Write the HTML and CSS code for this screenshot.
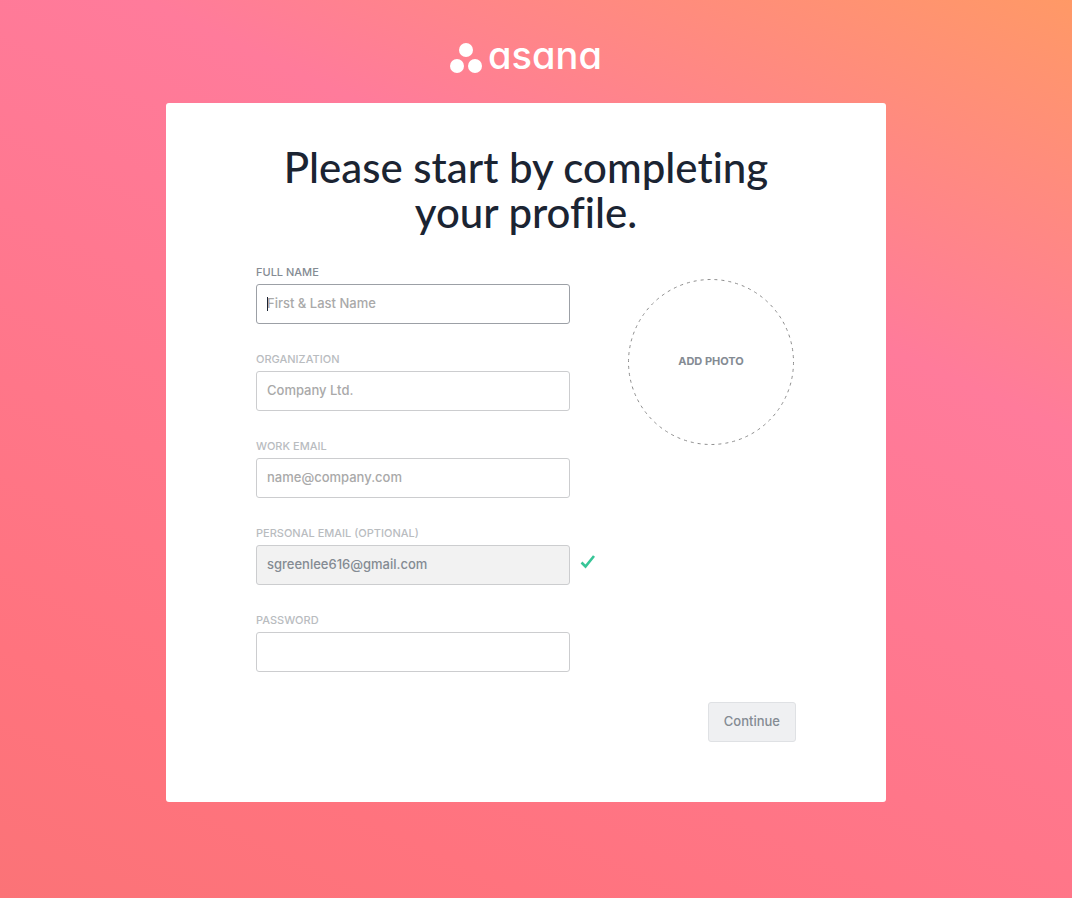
FILE: index.html
```html
<!DOCTYPE html>
<html lang="en">
<head>
<meta charset="utf-8">
<meta name="viewport" content="width=device-width, initial-scale=1">
<title>Asana</title>
<link rel="stylesheet" href="styles.css">
</head>
<body>
<div class="page">
  <header class="brand">
    <svg class="brand-mark" viewBox="0 0 32 30" aria-hidden="true">
      <circle cx="16" cy="7" r="7"/>
      <circle cx="7" cy="23" r="7"/>
      <circle cx="25" cy="23" r="7"/>
    </svg>
    <span class="brand-name">asana</span>
  </header>

  <main class="card">
    <h1 class="title">Please start by completing your profile.</h1>
    <form class="profile">
      <div class="fields">
        <div class="field field-active">
          <label for="name">FULL NAME</label>
          <div class="control">
            <input id="name" type="text" placeholder="First &amp; Last Name">
            <span class="caret" aria-hidden="true"></span>
          </div>
        </div>
        <div class="field">
          <label for="org">ORGANIZATION</label>
          <input id="org" type="text" placeholder="Company Ltd.">
        </div>
        <div class="field">
          <label for="work">WORK EMAIL</label>
          <input id="work" type="email" placeholder="name@company.com">
        </div>
        <div class="field">
          <label for="personal">PERSONAL EMAIL (OPTIONAL)</label>
          <div class="control">
            <input id="personal" type="email" value="sgreenlee616@gmail.com" readonly>
            <svg class="check" viewBox="0 0 16 16" aria-hidden="true"><path d="M1.5 8.5 5.5 12.5 14 2"/></svg>
          </div>
        </div>
        <div class="field">
          <label for="password">PASSWORD</label>
          <input id="password" type="password">
        </div>
      </div>
      <button class="photo" type="button">
        <svg class="photo-ring" viewBox="0 0 166 166" aria-hidden="true"><circle cx="83" cy="83" r="82.5" pathLength="518"/></svg>
        ADD PHOTO
      </button>
      <button class="continue" type="submit">Continue</button>
    </form>
  </main>
</div>
</body>
</html>
```

FILE: styles.css
```css
* {
  box-sizing: border-box;
}

body {
  margin: 0;
  color: #1b2432;
  font-family: "Inter", "Liberation Sans", sans-serif;
}

.page {
  display: flex;
  flex-direction: column;
  align-items: center;
  min-height: 100vh;
  padding: 32px 20px 96px 0;
  background: linear-gradient(205deg, #ff9966 0%, #ff7b9b 31%, #ff737e 82%, #fb7377 100%);
}

.brand {
  display: flex;
  align-items: center;
  gap: 6px;
  height: 48px;
  color: #fff;
}

.brand-mark {
  width: 32px;
  height: 30px;
  margin-top: 4px;
  fill: #fff;
}

.brand-name {
  padding-bottom: 2px;
  font-size: 38px;
  font-weight: 500;
  font-feature-settings: "cv11";
  line-height: 46px;
}

.card {
  width: 100%;
  max-width: 720px;
  margin-top: 23px;
  padding: 42px 90px 60px;
  border-radius: 3px;
  background: #fff;
}

.title {
  margin: 0;
  font-family: "Lato", sans-serif;
  font-size: 42px;
  font-weight: 500;
  font-variant-ligatures: none;
  line-height: 45px;
  text-align: center;
}

.profile {
  display: grid;
  grid-template-columns: minmax(0, 314px) 168px;
  justify-content: space-between;
  row-gap: 30px;
  margin-top: 27px;
}

.fields {
  display: flex;
  flex-direction: column;
  gap: 25px;
}

.field label {
  display: block;
  padding-bottom: 2px;
  color: #b9bcbf;
  font-size: 11px;
  font-weight: 500;
  line-height: 20px;
}

.field-active label {
  color: #848b93;
}

.control {
  position: relative;
}

.field input {
  display: block;
  width: 100%;
  height: 40px;
  padding: 0 10px 2px;
  border: 1px solid #cccdcf;
  border-radius: 3px;
  outline: none;
  background: #fff;
  color: #848b93;
  font-family: inherit;
  font-size: 13px;
  font-weight: 500;
}

.field input::placeholder {
  color: #a9a9a9;
  opacity: 1;
}

.field input:read-only {
  background: #f2f2f2;
}

.field-active input {
  border-color: #9ca0a6;
}

.caret {
  position: absolute;
  top: 13px;
  left: 11px;
  width: 1px;
  height: 14px;
  background: #1b2432;
}

.check {
  position: absolute;
  top: 9px;
  left: calc(100% + 10px);
  width: 16px;
  height: 16px;
  fill: none;
  stroke: #37c597;
  stroke-width: 2.6;
}

.photo {
  position: relative;
  width: 166px;
  height: 166px;
  margin-top: 17px;
  padding: 0 0 2px;
  border: 0;
  border-radius: 50%;
  background: none;
  color: #848b93;
  font-family: inherit;
  font-size: 11px;
  font-weight: 700;
}

.photo-ring {
  position: absolute;
  inset: 0;
  fill: none;
  stroke: #8c8c8c;
  stroke-dasharray: 3 4;
}

.continue {
  grid-column: 2;
  justify-self: end;
  height: 40px;
  padding: 0 15px 2px;
  border: 1px solid #dfe1e4;
  border-radius: 3px;
  background: #eff0f2;
  color: #848b93;
  font-family: inherit;
  font-size: 13px;
  font-weight: 500;
}
```
